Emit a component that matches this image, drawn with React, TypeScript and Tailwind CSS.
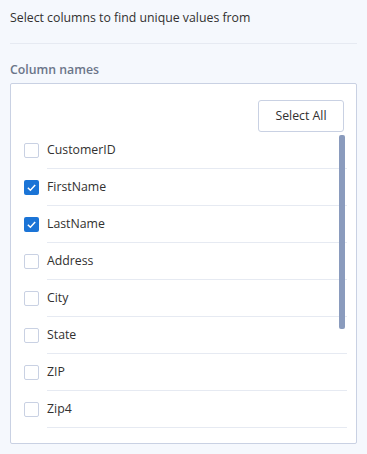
import React, { useState } from "react";

const COLUMNS = ["CustomerID", "FirstName", "LastName", "Address", "City", "State", "ZIP", "Zip4"];

function Check({ checked }: { checked: boolean }) {
  return checked ? (
    <span className="w-[15px] h-[15px] rounded-[2px] bg-[#1b74d6] flex items-center justify-center shrink-0">
      <svg width="11" height="11" viewBox="0 0 12 12" fill="none">
        <path d="M2 6.2 4.8 9 10 3.2" stroke="white" strokeWidth="1.6" />
      </svg>
    </span>
  ) : (
    <span className="w-[15px] h-[15px] rounded-[2px] border border-[#c9d1e3] bg-white shrink-0" />
  );
}

export default function App() {
  const [checked, setChecked] = useState<Record<string, boolean>>({ FirstName: true, LastName: true });

  return (
    <div className="w-[367px] h-[454px] bg-[#f5f8fd] px-[10px] pt-[9px] font-['Open_Sans',sans-serif] text-[#323130]">
      <p className="text-[12.3px] leading-[18px]">Select columns to find unique values from</p>
      <div className="h-px bg-[#e6eaf2] mt-[16px]" />
      <p className="text-[12.3px] font-semibold text-[#6b7589] mt-[17px] leading-[18px]">Column names</p>
      <div className="mt-[4px] h-[361px] bg-white border border-[#c9d1e3] rounded-[2px] flex flex-col">
        <div className="flex justify-end pr-[12px] pt-[16px]">
          <button className="h-[32px] w-[86px] border border-[#c9d1e3] rounded-[3px] bg-white text-[12.3px] text-[#323130]">
            Select All
          </button>
        </div>
        <div className="relative">
          <ul className="pl-[13px] pr-[9px]">
            {COLUMNS.map((c) => (
              <li
                key={c}
                onClick={() => setChecked({ ...checked, [c]: !checked[c] })}
                className="flex items-center gap-[8px] h-[37px] cursor-pointer"
              >
                <Check checked={!!checked[c]} />
                <span className="flex-1 h-full flex items-center text-[12.3px] border-b border-[#e6eaf2]">
                  {c}
                </span>
              </li>
            ))}
          </ul>
          <div className="absolute right-[11px] top-[3px] w-[6px] h-[194px] rounded-[2px] bg-[#8a9bbd]" />
        </div>
      </div>
    </div>
  );
}
